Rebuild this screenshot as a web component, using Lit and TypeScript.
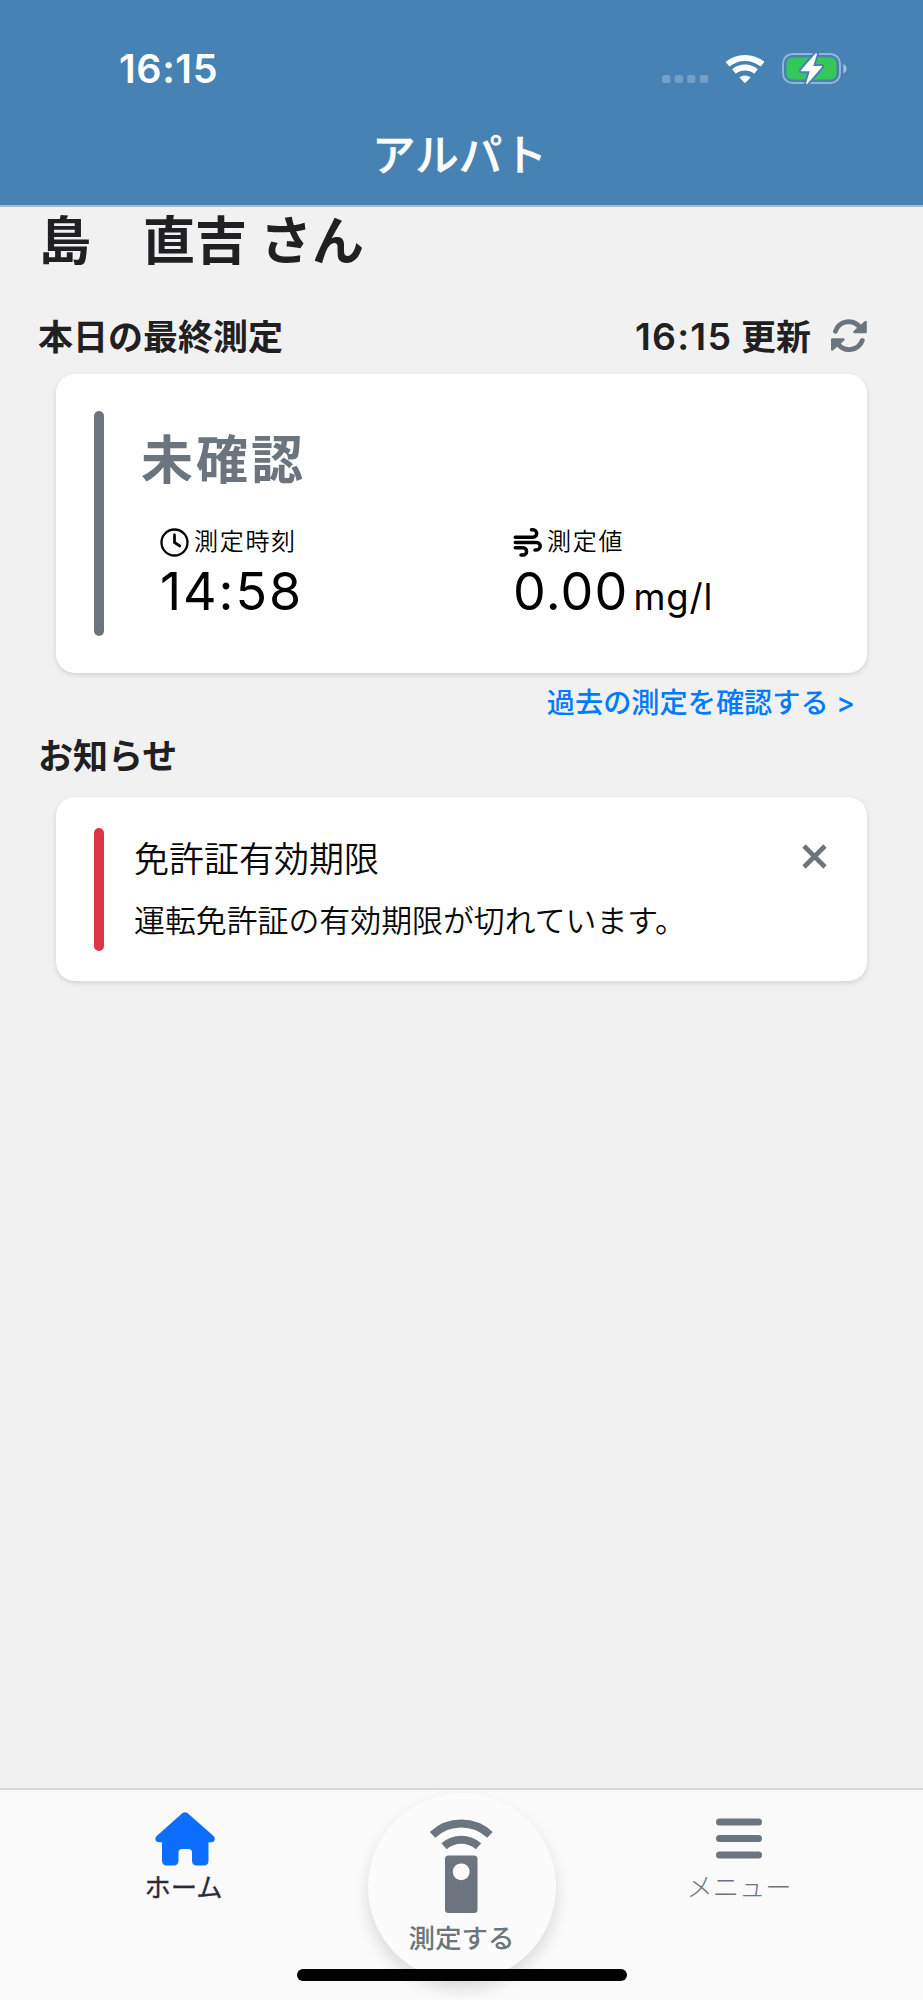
import { LitElement, html, css, svg } from "lit";
import { customElement } from "lit/decorators.js";

const refreshIcon = html`<svg class="refresh" viewBox="829 318 38 37" fill="none" stroke="currentColor" stroke-width="4.800" stroke-linecap="round">
  <path d="M834.500 331.200A14 14 0 0 1 859 327.500M861.300 340.400A14 14 0 0 1 837 344"/>
  <path d="M864.500 322.200V332H853.500zM831.300 349.300V339.500H842.300z" fill="currentColor" stroke-width="2.600" stroke-linejoin="round"/>
</svg>`;

@customElement("app-root")
export class AppRoot extends LitElement {
  static styles = css`
    :host { display: flex; flex-direction: column; width: 923px; height: 2000px; background: #f1f1f1; font-family: Inter, "Noto Sans CJK JP", sans-serif; color: #202022; overflow: hidden; }
    * { box-sizing: border-box; }
    svg { display: block; flex: none; }
    .header { height: 207px; background: #4682b4; border-bottom: 2px solid #b5b5b9; color: #fff; }
    .status { height: 105px; padding: 33px 76px 0 119px; display: flex; justify-content: space-between; }
    .clock { font-size: 39.500px; line-height: 72px; font-weight: 600; letter-spacing: 0.600px; }
    .title { text-align: center; font-size: 43.500px; line-height: 100px; font-weight: 500; height: 100px; padding-right: 4px; -webkit-text-stroke: 0.400px #fff; }
    .main { flex: 1; display: flex; flex-direction: column; padding: 0 56px 0 38px; }
    .name { font-size: 52px; line-height: 70px; font-weight: 600; height: 68px; white-space: pre; padding-left: 1px; }
    .row { display: flex; justify-content: space-between; align-items: center; height: 50px; font-size: 35px; font-weight: 600; margin-top: 37px; line-height: 50px; white-space: pre; }
    .updated { display: flex; align-items: center; gap: 19px; }
    .time { font-size: 37.500px; letter-spacing: 1.200px; }
    .refresh { width: 38px; height: 37px; color: #6c757d; margin: -1px -1px 0 0; }
    .card { background: #fff; border-radius: 19px; box-shadow: 0 2px 5px rgba(0,0,0,.13); margin-left: 18px; display: flex; color: #0a0a0a; }
    .bar { width: 10px; border-radius: 5px; flex: none; }
    .result { height: 299px; margin-top: 12px; padding: 37px 38px; }
    .result .bar { background: #6c757d; }
    .body { flex: 1; padding-left: 37px; }
    .state { color: #6c757d; font-weight: 700; font-size: 52px; letter-spacing: 3px; line-height: 70px; height: 70px; margin-top: 15px; }
    .metrics { display: grid; grid-template-columns: 353px 1fr; padding-left: 19px; margin-top: 30px; color: #000; }
    .label { display: flex; align-items: center; height: 32px; gap: 5px; font-size: 24px; letter-spacing: 1.700px; font-weight: 350; }
    .label svg { width: 29px; height: 29px; }
    .label span { line-height: 30px; padding-bottom: 1px; }
    .value { font-size: 52px; line-height: 70px; letter-spacing: 1.200px; height: 70px; font-weight: 400; white-space: nowrap; margin-top: -1px; }
    .value.at { letter-spacing: 1.900px; }
    .unit { font-size: 36.500px; margin-left: 5px; letter-spacing: .800px; }
    .link { color: #007bff; font-size: 28.200px; line-height: 40px; height: 40px; margin-top: 10px; text-align: right; padding-right: 12px; white-space: pre; font-weight: 500; }
    .notice-head { margin-top: 8px; }
    .notice { height: 184px; margin-top: 16px; padding: 31px 38px 30px; }
    .notice .bar { background: #dc3545; }
    .text { flex: 1; padding-left: 30px; font-weight: 350; }
    .ntitle { font-size: 35px; line-height: 50px; height: 50px; margin-top: 6px; }
    .nbody { font-size: 30.900px; line-height: 46px; margin-top: 14px; white-space: nowrap; }
    .close { width: 27px; height: 27px; margin: 15px 1px 0 0; }
    .tabs { height: 212px; background: #fafafa; border-top: 2px solid #d9d9d9; display: grid; grid-template-columns: 277px 369px 277px; position: relative; }
    .tab { display: flex; flex-direction: column; align-items: center; font-size: 26.300px; line-height: 36px; }
    .tab.home { padding: 22px 0 0 92px; color: #2c2c36; font-weight: 400; -webkit-text-stroke: 0.300px #2c2c36; }
    .tab.menu { padding: 22px 91px 0 0; color: #6c757d; font-weight: 300; }
    .tab span { margin-top: 4px; white-space: nowrap; }
    .tab.home span { margin-right: 2px; }
    .round { width: 188px; height: 188px; border-radius: 50%; background: #fbfbfb; box-shadow: 0 8px 16px rgba(0,0,0,.13); margin: 3px auto 0; display: flex; flex-direction: column; align-items: center; color: #6c757d; font-size: 26.500px; font-weight: 500; line-height: 36px; }
    .remote { width: 64px; height: 96px; margin-top: 25px; }
    .round span { margin-top: 6px; }
    .indicator { position: absolute; left: 297px; bottom: 19px; width: 330px; height: 12px; border-radius: 6px; background: #000; }
    .sys { display: flex; height: 40px; margin-top: 15px; }
  `;

  render() {
    return html`
      <header class="header">
        <div class="status">
          <span class="clock">16:15</span>
          <svg class="sys" width="186" height="40" viewBox="661 48 186 40">
            <g fill="#fff" fill-opacity=".24">${[662, 674.7, 687.1, 699.8].map((x) => svg`<rect x=${x} y="75" width="8.400" height="8" rx="2.500"/>`)}</g>
            <g fill="none" stroke="#fff"><path d="M727.500 64.200A27.500 27.500 0 0 1 762.500 64.200" stroke-width="6"/><path d="M734 71.400A17.500 17.500 0 0 1 756 71.400" stroke-width="5.800"/></g>
            <path d="M739.400 77.400a9 9 0 0 1 11.200 0L745.800 82.500q-.8.800-1.600 0z" fill="#fff"/>
            <rect x="783" y="54" width="57" height="29" rx="9.500" fill="none" stroke="#fff" stroke-opacity=".42" stroke-width="1.900"/>
            <rect x="786.500" y="57.500" width="50" height="22" rx="6" fill="#34c759"/>
            <path d="M843.300 64v9.600a5.200 5.200 0 0 0 0-9.600z" fill="#fff" fill-opacity=".5"/>
            <path d="M815.500 53.500L801 70.300q-.6 1 .5 1H809.800L806 83.500q.2 1.200 1.400.3L822 67q.5-1-.6-1H813.200L817 54q-.4-1.400-1.500-.5z" fill="#fff" stroke="#4682b4" stroke-width="4" paint-order="stroke"/>
          </svg>
        </div>
        <div class="title">アルパト</div>
      </header>
      <main class="main">
        <div class="name">島　直吉 さん</div>
        <div class="row"><span>本日の最終測定</span><span class="updated"><span><span class="time">16:15</span> 更新</span>${refreshIcon}</span></div>
        <section class="card result">
          <div class="bar"></div>
          <div class="body">
            <div class="state">未確認</div>
            <div class="metrics">
              <div>
                <div class="label"><svg viewBox="0 0 29 29" fill="none" stroke="#000" stroke-linecap="round"><circle cx="14.500" cy="14.500" r="13" stroke-width="2.300"/><path d="M14.500 6.800v7.700l5.300 3.500" stroke-width="2.700"/></svg><span>測定時刻</span></div>
                <div class="value at">14:58</div>
              </div>
              <div>
                <div class="label"><svg viewBox="0 0 29 29" fill="none" stroke="#000" stroke-width="3.500" stroke-linecap="round"><path d="M2.300 9.200H20a3.700 3.700 0 1 0 0-7.400H18.500M2.300 14.500H23.500a3.700 3.700 0 0 1 0 7.400H22M2.300 19.800H10a3.600 3.600 0 0 1 0 7.200H8"/></svg><span>測定値</span></div>
                <div class="value">0.00<span class="unit">mg/l</span></div>
              </div>
            </div>
          </div>
        </section>
        <div class="link">過去の測定を確認する &gt;</div>
        <div class="row notice-head">お知らせ</div>
        <section class="card notice">
          <div class="bar"></div>
          <div class="text"><div class="ntitle">免許証有効期限</div><div class="nbody">運転免許証の有効期限が切れています。</div></div>
          <svg class="close" viewBox="0 0 27 27" stroke="#6c757d" stroke-width="4.600"><path d="M3 3L24 24M24 3L3 24"/></svg>
        </section>
      </main>
      <nav class="tabs">
        <div class="tab home"><svg width="60" height="54" viewBox="0 0 60 54" fill="#0d6efd"><path d="M27.500 1.100q2.500-1.900 5 0L58.500 24q1.500 1.500 1.300 3.300-.5 2.900-3.500 2.900H53.500V48.500q0 5-5 5H42q-5 0-5-5V40.500q0-3.500-3.500-3.500H27q-3.500 0-3.500 3.500V48.500q0 5-5 5H12q-5 0-5-5V30.200H4.200Q.7 30.200.3 27.300.200 25.500 1.700 24z"/></svg><span>ホーム</span></div>
        <div class="round">
          <svg class="remote" viewBox="429.500 1818 64 96"><g fill="none" stroke="#6c757d" stroke-width="8"><path d="M432 1834.800A42 42 0 0 1 489.500 1834.800M443.500 1846.300A26 26 0 0 1 478 1846.300"/></g><path fill="#6c757d" fill-rule="evenodd" d="M448 1855.500h25.500a3.500 3.500 0 0 1 3.500 3.500V1909.500a3.500 3.500 0 0 1-3.500 3.500H448a3.500 3.500 0 0 1-3.500-3.500V1859a3.500 3.500 0 0 1 3.500-3.500zM460.700 1863.400a8.400 8.400 0 1 0 .01 0z"/></svg>
          <span>測定する</span>
        </div>
        <div class="tab menu"><svg width="46" height="54" viewBox="0 0 46 54" stroke="#6c757d" stroke-width="7" stroke-linecap="round"><path d="M3.500 10H42.500M3.500 26.500H42.500M3.500 43H42.500"/></svg><span>メニュー</span></div>
        <div class="indicator"></div>
      </nav>
    `;
  }
}
